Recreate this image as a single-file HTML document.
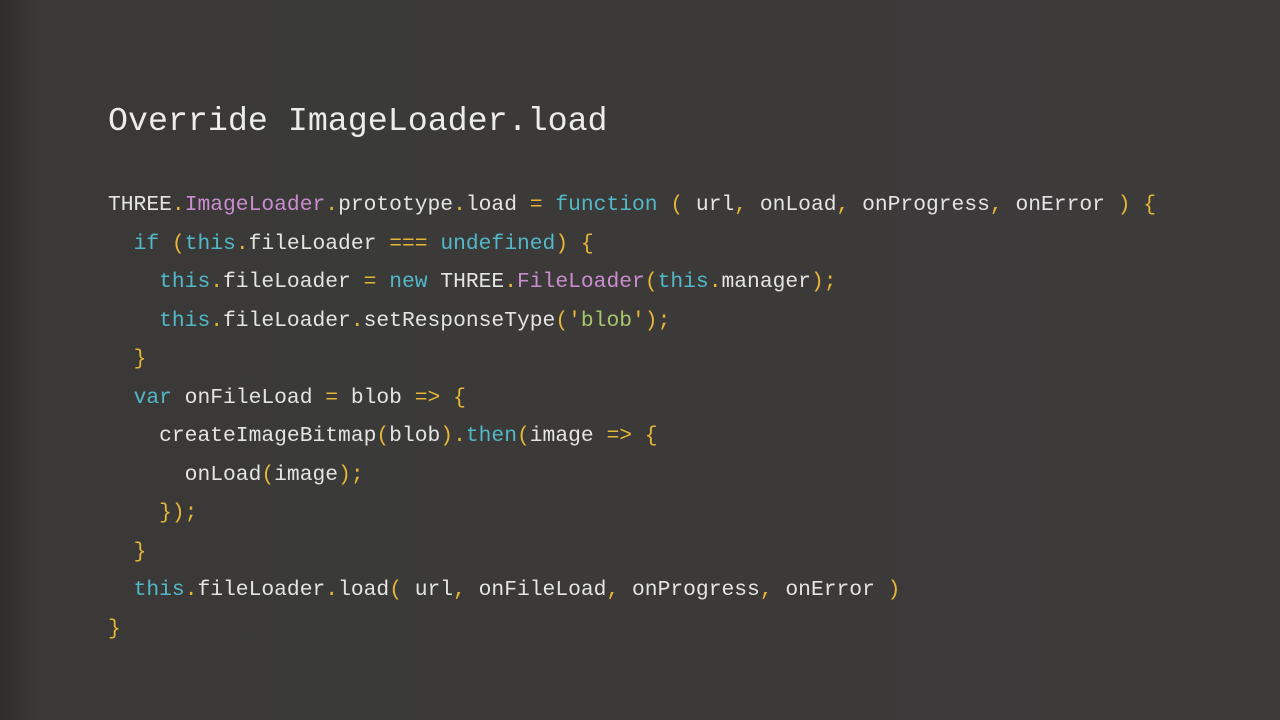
<!DOCTYPE html><html><head><style>
body{margin:0;width:1280px;height:720px;overflow:hidden;background:linear-gradient(90deg,#2f2e2d 0px,#3a3938 40px,#3c3b3a 100%);}
h1{position:absolute;left:108px;top:99px;margin:0;font:33.3px/44px "Liberation Mono",monospace;color:#ececec;font-weight:normal}
pre{position:absolute;left:108px;top:186px;margin:0;font:21.3px/38.5px "Liberation Mono",monospace;color:#e4e4e4}
.p{color:#c98dcf}.c{color:#52b8c8}.y{color:#e6b637}.g{color:#a6c66c}
</style></head><body>
<h1>Override ImageLoader.load</h1>
<pre>THREE<span class="y">.</span><span class="p">ImageLoader</span><span class="y">.</span>prototype<span class="y">.</span>load <span class="y">=</span> <span class="c">function</span> <span class="y">(</span> url<span class="y">,</span> onLoad<span class="y">,</span> onProgress<span class="y">,</span> onError <span class="y">) {</span>
  <span class="c">if</span> <span class="y">(</span><span class="c">this</span><span class="y">.</span>fileLoader <span class="y">===</span> <span class="c">undefined</span><span class="y">) {</span>
    <span class="c">this</span><span class="y">.</span>fileLoader <span class="y">=</span> <span class="c">new</span> THREE<span class="y">.</span><span class="p">FileLoader</span><span class="y">(</span><span class="c">this</span><span class="y">.</span>manager<span class="y">);</span>
    <span class="c">this</span><span class="y">.</span>fileLoader<span class="y">.</span>setResponseType<span class="y">('</span><span class="g">blob</span><span class="y">');</span>
  <span class="y">}</span>
  <span class="c">var</span> onFileLoad <span class="y">=</span> blob <span class="y">=&gt; {</span>
    createImageBitmap<span class="y">(</span>blob<span class="y">).</span><span class="c">then</span><span class="y">(</span>image <span class="y">=&gt; {</span>
      onLoad<span class="y">(</span>image<span class="y">);</span>
    <span class="y">});</span>
  <span class="y">}</span>
  <span class="c">this</span><span class="y">.</span>fileLoader<span class="y">.</span>load<span class="y">(</span> url<span class="y">,</span> onFileLoad<span class="y">,</span> onProgress<span class="y">,</span> onError <span class="y">)</span>
<span class="y">}</span></pre>
</body></html>
